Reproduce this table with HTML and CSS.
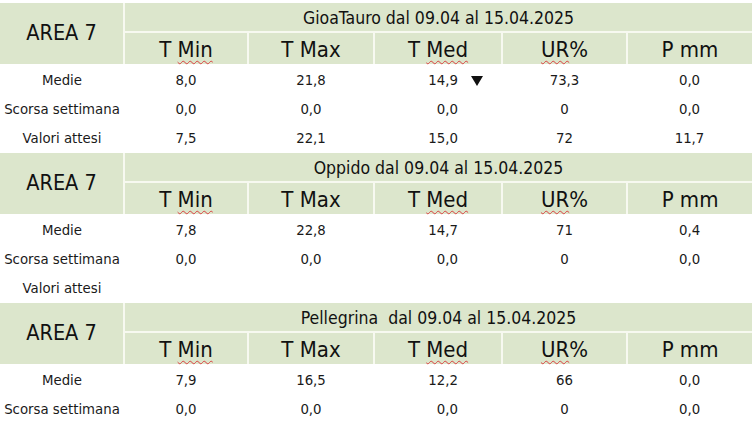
FILE: index.html
```html
<!DOCTYPE html>
<html lang="it">
<head>
<meta charset="utf-8">
<title>Area 7</title>
<link rel="stylesheet" href="styles.css">
</head>
<body>
<div class="page">
  <table class="area">
    <colgroup><col class="c-lab"><col class="c-min"><col class="c-max"><col class="c-med"><col class="c-ur"><col class="c-p"></colgroup>
    <tr class="r-title">
      <th class="area-name" rowspan="2">AREA 7</th>
      <th class="title" colspan="5">GioaTauro dal 09.04 al 15.04.2025</th>
    </tr>
    <tr class="r-head">
      <th class="h">T <span class="sp">Min</span></th>
      <th class="h">T Max</th>
      <th class="h">T <span class="sp">Med</span></th>
      <th class="h"><span class="sp">UR</span>%</th>
      <th class="h">P mm</th>
    </tr>
    <tr class="r-data">
      <td class="lab">Medie</td><td>8,0</td><td>21,8</td>
      <td class="med">14,9<span class="ind"><svg class="tri" width="12" height="10" viewBox="0 0 12 10"><polygon points="0,0 12,0 6,10" fill="#111"/></svg></span></td>
      <td>73,3</td><td>0,0</td>
    </tr>
    <tr class="r-data">
      <td class="lab">Scorsa settimana</td><td>0,0</td><td>0,0</td>
      <td class="med">0,0<span class="ind"></span></td>
      <td>0</td><td>0,0</td>
    </tr>
    <tr class="r-data">
      <td class="lab">Valori attesi</td><td>7,5</td><td>22,1</td>
      <td class="med">15,0<span class="ind"></span></td>
      <td>72</td><td>11,7</td>
    </tr>
  </table>

  <table class="area">
    <colgroup><col class="c-lab"><col class="c-min"><col class="c-max"><col class="c-med"><col class="c-ur"><col class="c-p"></colgroup>
    <tr class="r-title">
      <th class="area-name" rowspan="2">AREA 7</th>
      <th class="title" colspan="5">Oppido dal 09.04 al 15.04.2025</th>
    </tr>
    <tr class="r-head">
      <th class="h">T <span class="sp">Min</span></th>
      <th class="h">T Max</th>
      <th class="h">T <span class="sp">Med</span></th>
      <th class="h"><span class="sp">UR</span>%</th>
      <th class="h">P mm</th>
    </tr>
    <tr class="r-data">
      <td class="lab">Medie</td><td>7,8</td><td>22,8</td>
      <td class="med">14,7<span class="ind"></span></td>
      <td>71</td><td>0,4</td>
    </tr>
    <tr class="r-data">
      <td class="lab">Scorsa settimana</td><td>0,0</td><td>0,0</td>
      <td class="med">0,0<span class="ind"></span></td>
      <td>0</td><td>0,0</td>
    </tr>
    <tr class="r-data">
      <td class="lab">Valori attesi</td><td></td><td></td>
      <td class="med"><span class="ind"></span></td>
      <td></td><td></td>
    </tr>
  </table>

  <table class="area">
    <colgroup><col class="c-lab"><col class="c-min"><col class="c-max"><col class="c-med"><col class="c-ur"><col class="c-p"></colgroup>
    <tr class="r-title">
      <th class="area-name" rowspan="2">AREA 7</th>
      <th class="title" colspan="5">Pellegrina&nbsp; dal 09.04 al 15.04.2025</th>
    </tr>
    <tr class="r-head">
      <th class="h">T <span class="sp">Min</span></th>
      <th class="h">T Max</th>
      <th class="h">T <span class="sp">Med</span></th>
      <th class="h"><span class="sp">UR</span>%</th>
      <th class="h">P mm</th>
    </tr>
    <tr class="r-data">
      <td class="lab">Medie</td><td>7,9</td><td>16,5</td>
      <td class="med">12,2<span class="ind"></span></td>
      <td>66</td><td>0,0</td>
    </tr>
    <tr class="r-data">
      <td class="lab">Scorsa settimana</td><td>0,0</td><td>0,0</td>
      <td class="med">0,0<span class="ind"></span></td>
      <td>0</td><td>0,0</td>
    </tr>
  </table>
</div>
</body>
</html>
```

FILE: styles.css
```css
html, body {
  margin: 0;
  padding: 0;
  background: #ffffff;
}

body {
  font-family: "DejaVu Sans", "Noto Sans", sans-serif;
  font-stretch: condensed;
  color: #1a1a1a;
}

.page {
  padding-top: 1px;
  width: 752px;
}

.area {
  width: 752px;
  table-layout: fixed;
  border-collapse: collapse;
  margin-top: 2px;
}

.c-lab { width: 124px; }
.c-min { width: 124px; }
.c-max { width: 126px; }
.c-med { width: 128px; }
.c-ur  { width: 125px; }
.c-p   { width: 125px; }

th {
  background: #dce6cc;
  font-weight: normal;
  color: #111;
  padding: 0;
}

.r-title { height: 29px; }
.r-head  { height: 32px; }
.r-data  { height: 29px; }

.area-name {
  font-size: 21.5px;
  border-right: 2px solid #f7f9f0;
  padding-bottom: 2px;
}

.title {
  font-size: 17.5px;
  border-bottom: 2px solid #f7f9f0;
  padding-top: 2px;
}

.h {
  font-size: 22px;
  border-left: 2px solid #f7f9f0;
  padding-top: 2px;
}

.sp {
  text-decoration-line: underline;
  text-decoration-style: wavy;
  text-decoration-color: #d84040;
  text-decoration-thickness: 1px;
  text-underline-offset: 3px;
}

td {
  font-size: 14.8px;
  text-align: center;
  padding: 2px 0 0;
  color: #1a1a1a;
}

td.med {
  text-align: right;
  padding-right: 14px;
}

.ind {
  display: inline-block;
  width: 30px;
  text-align: left;
}

.tri {
  margin-left: 13px;
  vertical-align: -1px;
}
```
